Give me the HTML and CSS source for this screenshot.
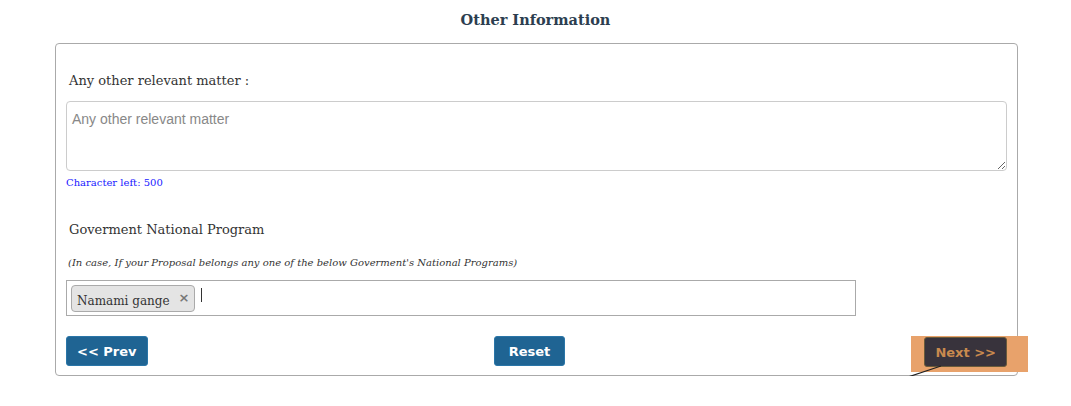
FILE: index.html
```html
<!DOCTYPE html>
<html lang="en">
<head>
    <meta charset="UTF-8">
    <meta name="viewport" content="width=device-width, initial-scale=1.0">
    <title>Other Information</title>
    <link rel="stylesheet" href="styles.css">
</head>
<body>

    <h2 class="section-title">Other Information</h2>

    <div class="panel">
        <label class="field-label" for="matter">Any other relevant matter :</label>
        <textarea id="matter" class="matter-box" placeholder="Any other relevant matter"></textarea>
        <div class="char-left">Character left: 500</div>

        <label class="field-label program-label">Goverment National Program</label>
        <p class="note">(In case, If your Proposal belongs any one of the below Goverment's National Programs)</p>

        <div class="tag-select">
            <span class="tag">Namami gange <span class="tag-remove">&times;</span></span>
            <span class="caret"></span>
        </div>

        <div class="actions">
            <button class="btn btn-narrow">&lt;&lt; Prev</button>
            <button class="btn">Reset</button>
            <div class="next-wrap">
                <button class="btn btn-narrow btn-next">Next &gt;&gt;</button>
                <svg class="pointer-line" width="46" height="16" viewBox="0 0 46 16">
                    <line x1="0" y1="15" x2="42" y2="1" stroke="#222" stroke-width="1.2"/>
                </svg>
            </div>
        </div>
    </div>

</body>
</html>
```

FILE: styles.css
```css
body {
    margin: 0;
    background: #fff;
    font-family: "DejaVu Serif", "Liberation Serif", serif;
    color: #333;
}

.section-title {
    text-align: center;
    font-size: 14.5px;
    color: #2c3e50;
    margin: 10px 0 13px;
    line-height: 20px;
}

.panel {
    margin-left: 55px;
    width: 941px;
    border: 1px solid #aaa;
    border-radius: 4px;
    padding: 29px 10px 3px 10px;
}

.field-label {
    display: block;
    font-size: 13px;
    margin-left: 3px;
    color: #333;
}

.matter-box {
    display: block;
    width: 941px;
    height: 70px;
    margin-top: 13px;
    box-sizing: border-box;
    border: 1px solid #ccc;
    border-radius: 4px;
    padding: 9px 5px;
    font-family: "Liberation Sans", Arial, sans-serif;
    font-size: 14px;
    resize: vertical;
}

.matter-box::placeholder {
    color: #888;
}

.char-left {
    color: #1a1aff;
    font-size: 10px;
    margin-top: 6px;
}

.program-label {
    margin-top: 34px;
}

.note {
    font-style: italic;
    font-size: 10px;
    margin: 20px 0 0 2px;
    color: #333;
}

.tag-select {
    width: 790px;
    height: 36px;
    margin-top: 12px;
    box-sizing: border-box;
    border: 1px solid #aaa;
    display: flex;
    align-items: center;
    padding-left: 4px;
    gap: 6px;
}

.tag {
    background: #e4e4e4;
    border: 1px solid #aaa;
    border-radius: 4px;
    padding: 4px 5px 3px 5px;
    font-size: 12px;
    color: #333;
}

.tag-remove {
    font-family: "DejaVu Sans", sans-serif;
    font-weight: bold;
    color: #777;
    font-size: 13px;
    margin-left: 5px;
    vertical-align: 3px;
}

.caret {
    width: 1px;
    height: 14px;
    background: #333;
    margin-bottom: 6px;
}

.actions {
    display: flex;
    justify-content: space-between;
    align-items: flex-start;
    margin-top: 20px;
}

.btn {
    background: #1f6493;
    color: #fff;
    border: 1px solid #2a76a8;
    border-radius: 3px;
    font-family: "DejaVu Sans", Verdana, sans-serif;
    font-weight: bold;
    font-size: 13px;
    height: 30px;
    padding: 0 14px;
}

.btn-narrow {
    padding: 0 10px;
}

.next-wrap {
    position: relative;
    background: #e8a26b;
    padding: 1px 21px 5px 13px;
    margin-right: -21px;
}

.btn-next {
    background: #38333c;
    color: #c98a4e;
    border-color: #6a5a3a;
}

.pointer-line {
    position: absolute;
    left: -12px;
    top: 29px;
}
```
